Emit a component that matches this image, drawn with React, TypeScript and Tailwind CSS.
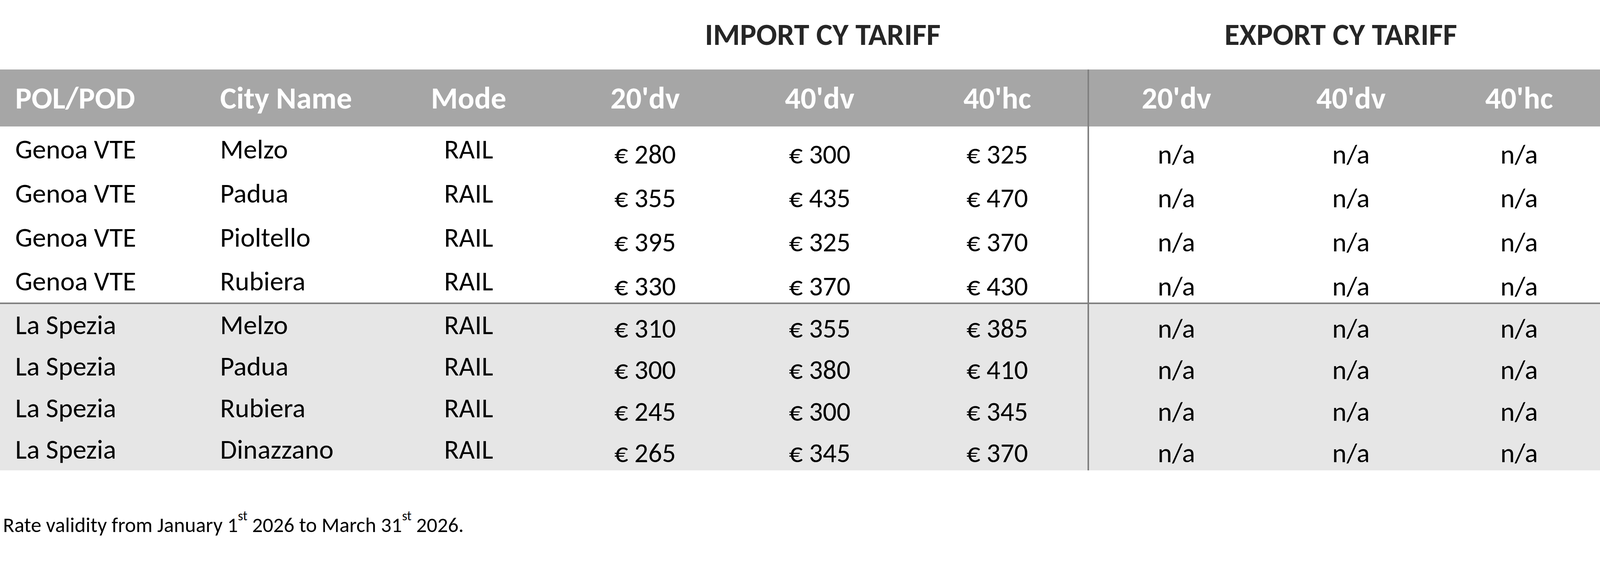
import React from 'react';

const font = "font-['Carlito','Calibri','Open_Sans',sans-serif]";

const cols = 'grid grid-cols-[524.6px_446.9px_456.6px_446.9px_446.9px_462.4px_450.8px_446.9px_1fr]';

const sizes = ["20'dv", "40'dv", "40'hc"];

const genoa = [
  { pol: 'Genoa VTE', city: 'Melzo', rates: ['€ 280', '€ 300', '€ 325'] },
  { pol: 'Genoa VTE', city: 'Padua', rates: ['€ 355', '€ 435', '€ 470'] },
  { pol: 'Genoa VTE', city: 'Pioltello', rates: ['€ 395', '€ 325', '€ 370'] },
  { pol: 'Genoa VTE', city: 'Rubiera', rates: ['€ 330', '€ 370', '€ 430'] },
];

const spezia = [
  { pol: 'La Spezia', city: 'Melzo', rates: ['€ 310', '€ 355', '€ 385'] },
  { pol: 'La Spezia', city: 'Padua', rates: ['€ 300', '€ 380', '€ 410'] },
  { pol: 'La Spezia', city: 'Rubiera', rates: ['€ 245', '€ 300', '€ 345'] },
  { pol: 'La Spezia', city: 'Dinazzano', rates: ['€ 265', '€ 345', '€ 370'] },
];

type Row = { pol: string; city: string; rates: string[] };

const TariffRow: React.FC<{ row: Row; tall: boolean }> = ({ row, tall }) => {
  // text cols sit a little higher than the rate cols, like the original sheet
  const textPad = tall ? 'pt-[23.7px]' : 'pt-[18.8px]';
  const ratePad = tall ? 'pt-[36.3px]' : 'pt-[27.6px]';
  return (
    <div className={`${cols} ${tall ? 'h-[112.7px]' : 'h-[106.4px]'} text-[69.9px] leading-none text-black`}>
      <div className={`pl-[38.9px] ${textPad}`}>{row.pol}</div>
      <div className={`pl-[38.9px] ${textPad}`}>{row.city}</div>
      <div className={`text-center ${textPad}`}>RAIL</div>
      {row.rates.map((r, i) => (
        <div key={i} className={`text-center ${ratePad}`}>{r}</div>
      ))}
      <div className={`text-center border-l-[4.9px] border-[#808080] ${ratePad}`}>n/a</div>
      <div className={`text-center ${ratePad}`}>n/a</div>
      <div className={`text-center ${ratePad}`}>n/a</div>
    </div>
  );
};

export default function App() {
  return (
    <div className={`w-full min-h-screen bg-white ${font}`}>
      {/* Group titles */}
      <div className={`${cols} h-[177.8px] text-[78.7px] leading-none font-bold text-[#262626]`}>
        <div className="col-span-3" />
        <div className="col-span-3 text-center pt-[49.4px]">IMPORT CY TARIFF</div>
        <div className="col-span-3 text-center pt-[49.4px] pr-[15.5px]">EXPORT CY TARIFF</div>
      </div>

      {/* Header band */}
      <div className={`${cols} h-[146.7px] bg-[#a6a6a6] text-white text-[78.7px] leading-none font-bold`}>
        <div className="pl-[38.9px] pt-[33.8px]">POL/POD</div>
        <div className="pl-[38.9px] pt-[33.8px]">City Name</div>
        <div className="text-center pt-[33.8px]">Mode</div>
        {sizes.map((s) => (
          <div key={'i' + s} className="text-center pt-[33.8px]">{s}</div>
        ))}
        {sizes.map((s, i) => (
          <div
            key={'e' + s}
            className={`text-center pt-[33.8px] ${i === 0 ? 'border-l-[4.9px] border-[#808080]' : ''}`}
          >
            {s}
          </div>
        ))}
      </div>

      {genoa.map((row, i) => (
        <TariffRow key={'g' + i} row={row} tall />
      ))}

      <div className="h-[3.9px] bg-[#808080]" />

      <div className="bg-[#e6e6e6]">
        {spezia.map((row, i) => (
          <TariffRow key={'s' + i} row={row} tall={false} />
        ))}
      </div>

      {/* Footnote */}
      <div className="pl-[7.8px] pt-[113.2px] text-[53.4px] leading-none text-black">
        Rate validity from January 1<sup className="text-[34px] leading-none align-[13px]">st</sup> 2026 to March 31
        <sup className="text-[34px] leading-none align-[13px]">st</sup> 2026.
      </div>
    </div>
  );
}
